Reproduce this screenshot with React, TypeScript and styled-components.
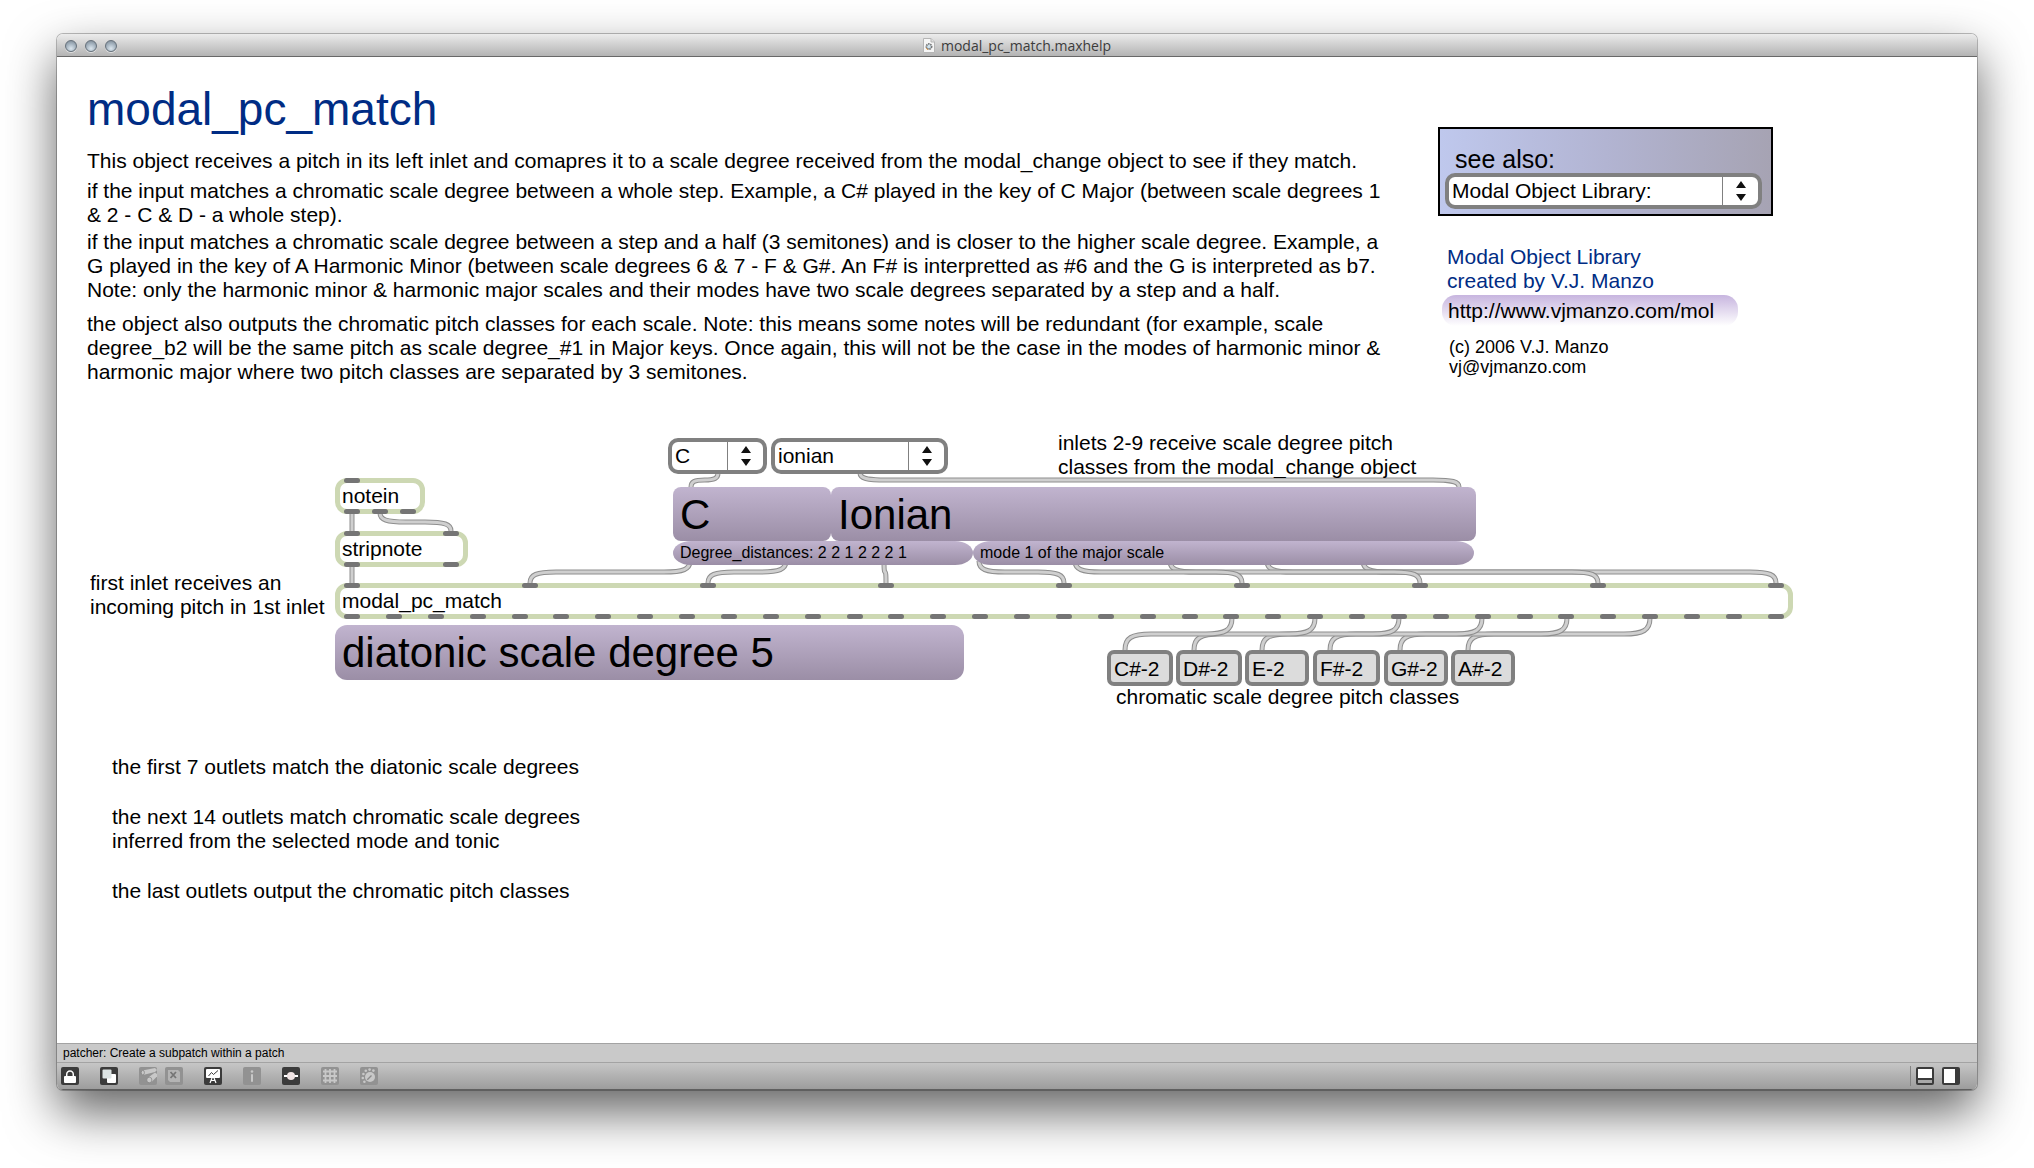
import React from "react";
import styled, { createGlobalStyle, css } from "styled-components";

const GlobalStyle = createGlobalStyle`
  *, *::before, *::after { box-sizing: border-box; }
  html, body, #root { height: 100%; }
  body {
    margin: 0;
    background: #fff;
    color: #000;
    font-family: "Liberation Sans", Arial, sans-serif;
    font-size: 21px;
    line-height: 24px;
  }
  button, input, select { font: inherit; color: inherit; }
  h1, p { margin: 0; }
`;

/* ---------- window frame ---------- */

const Desktop = styled.div`
  min-height: 100%;
  display: flex;
  padding: 34px 57px 78px;
`;

const Window = styled.main`
  flex: 1;
  min-width: 0;
  display: flex;
  flex-direction: column;
  background: #fff;
  border-radius: 6px;
  overflow: hidden;
  box-shadow: 0 0 0 1px rgba(0, 0, 0, 0.25), 0 22px 50px rgba(0, 0, 0, 0.62);
`;

const TitleBar = styled.header`
  height: 23px;
  display: grid;
  grid-template-columns: 1fr auto 1fr;
  align-items: center;
  padding: 1px 8px 0;
  background: linear-gradient(#ececec, #d2d2d2 45%, #b4b4b4);
  border-bottom: 1px solid #686868;
`;

const Lights = styled.div`
  display: flex;
  gap: 8px;
`;

const Light = styled.button`
  width: 12px;
  height: 12px;
  padding: 0;
  border: 1px solid #66717b;
  border-radius: 50%;
  background: radial-gradient(circle at 50% 75%, #dbe6ee, #a3b1bd 55%, #77848f);
  box-shadow: 0 1px 0 rgba(255, 255, 255, 0.5);
`;

const FileName = styled.div`
  display: flex;
  align-items: center;
  gap: 6px;
  color: #3c3c3c;
  font-family: "Open Sans", "Noto Sans", sans-serif;
  font-size: 14px;
  line-height: 20px;
`;

/* ---------- patch contents ---------- */

const Patch = styled.div`
  flex: 1;
`;

const Intro = styled.section`
  display: flex;
  align-items: flex-start;
  gap: 33px;
  height: 343px;
  padding: 26px 30px 0;
`;

const Description = styled.div`
  flex: 0 1 1318px;
  display: flex;
  flex-direction: column;
`;

const Title = styled.h1`
  color: #002c84;
  font-size: 46px;
  font-weight: 400;
  line-height: 52px;
`;

const Paragraph = styled.p<{ $gap: number }>`
  margin-top: ${(p) => p.$gap}px;
`;

const Aside = styled.aside`
  flex: 0 0 335px;
  display: flex;
  flex-direction: column;
  padding-top: 44px;
`;

const SeeAlso = styled.div`
  display: flex;
  flex-direction: column;
  padding: 17px 9px 5px 5px;
  border: 2px solid #000;
  background: linear-gradient(90deg, #bfc8ed, #b2b4d2 50%, #a6a3b3);
`;

const SeeAlsoLabel = styled.label`
  padding-left: 10px;
  font-size: 25px;
  line-height: 27px;
`;

const Credits = styled.div`
  display: flex;
  flex-direction: column;
  align-items: flex-start;
  margin-top: 29px;
  padding-left: 4px;
`;

const Author = styled.p`
  padding-left: 5px;
  color: #002c84;
`;

const SiteLink = styled.a`
  width: 296px;
  margin-top: 2px;
  padding: 1px 0 0 6px;
  border-radius: 14px;
  background: linear-gradient(#c7b5df, #fff);
  color: #000;
  line-height: 30px;
  text-decoration: none;
`;

const Copyright = styled.p`
  margin-top: 11px;
  padding-left: 7px;
  font-size: 18px;
  line-height: 20px;
`;

const Notes = styled.section`
  display: flex;
  flex-direction: column;
  gap: 26px;
  max-width: 560px;
  padding: 0 0 0 55px;
`;

/* ---------- menus ---------- */

const MenuFrame = styled.div`
  height: 36px;
  display: grid;
  grid-template-columns: 1fr 36px;
  border: 4px solid #808080;
  border-radius: 10px;
  background: #fff;
`;

const MenuSelect = styled.select`
  grid-area: 1 / 1 / 2 / 3;
  appearance: none;
  min-width: 0;
  padding: 0 36px 0 3px;
  border: 0;
  outline: 0;
  background: transparent;
`;

const MenuArrows = styled.span`
  grid-area: 1 / 2;
  display: grid;
  place-items: center;
  border-left: 1px solid #808080;
  pointer-events: none;
`;

interface MenuProps {
  id: string;
  value: string;
  label?: string;
}

function Menu({ id, value, label }: MenuProps) {
  return (
    <MenuFrame>
      <MenuSelect id={id} aria-label={label} defaultValue={value}>
        <option>{value}</option>
      </MenuSelect>
      <MenuArrows>
        <svg width="12" height="22" viewBox="0 0 12 22" aria-hidden="true">
          <path d="M6 1 L11 8 H1 Z M6 21 L11 14 H1 Z" fill="#111" />
        </svg>
      </MenuArrows>
    </MenuFrame>
  );
}

/* ---------- diagram ---------- */

const Canvas = styled.section`
  position: relative;
  height: 355px;
`;

const Cords = styled.svg`
  position: absolute;
  inset: 0;
  width: 100%;
  height: 100%;
`;

interface Place {
  $x: number;
  $y: number;
  $w: number;
  $h?: number;
}

const placed = css<Place>`
  position: absolute;
  left: ${(p) => p.$x}px;
  top: ${(p) => p.$y}px;
  width: ${(p) => p.$w}px;
  ${(p) => p.$h && `height: ${p.$h}px;`}
`;

const Slot = styled.div<Place>`
  ${placed}
`;

const Comment = styled.p<Place>`
  ${placed}
  overflow: hidden;
`;

const ObjectBox = styled.div<Place>`
  ${placed}
  height: 36px;
  padding: 1px 2px 0;
  border: 5px solid #cdd8b3;
  border-radius: 12px;
`;

const Ports = styled.div<{ $edge: "top" | "bottom" }>`
  position: absolute;
  left: 4px;
  right: 4px;
  ${(p) => p.$edge}: -5px;
  display: flex;
  justify-content: space-between;
`;

const Port = styled.span`
  width: 16px;
  height: 5px;
  border-radius: 3px;
  background: #757575;
`;

const Display = styled.div<Place & { $small?: boolean; $radius: string }>`
  ${placed}
  padding: 0 7px;
  border-radius: ${(p) => p.$radius};
  background: linear-gradient(#c1b4cf, #9b8ea6);
  font-size: ${(p) => (p.$small ? 16 : 42)}px;
  line-height: ${(p) => (p.$small ? 24 : 56)}px;
`;

const NumberBox = styled.input<Place>`
  ${placed}
  height: 36px;
  padding: 1px 2px 0 3px;
  border: 4px solid #808080;
  border-radius: 7px;
  outline: 0;
  background: #dcdcdc;
`;

interface PatchObjectProps {
  name: string;
  x: number;
  y: number;
  w: number;
  inlets: number;
  outlets: number;
}

function PatchObject({ name, x, y, w, inlets, outlets }: PatchObjectProps) {
  return (
    <ObjectBox $x={x} $y={y} $w={w}>
      <Ports $edge="top">
        {Array.from({ length: inlets }, (_, i) => (
          <Port key={i} />
        ))}
      </Ports>
      {name}
      <Ports $edge="bottom">
        {Array.from({ length: outlets }, (_, i) => (
          <Port key={i} />
        ))}
      </Ports>
    </ObjectBox>
  );
}

type Cord = [number, number, number, number];

const cords: Cord[] = [
  [295, 113, 295, 131],
  [323, 113, 394, 131],
  [295, 166, 295, 183],
  [661, 73, 634, 87],
  [803, 73, 1402, 87],
  [1306, 161, 1719, 183],
  [1210, 161, 1541, 183],
  [1113, 161, 1363, 183],
  [1018, 161, 1185, 183],
  [922, 161, 1007, 183],
  [827, 161, 829, 183],
  [729, 161, 651, 183],
  [633, 161, 473, 183],
  [1593, 218, 1411, 250],
  [1510, 218, 1343, 250],
  [1425, 218, 1273, 250],
  [1342, 218, 1205, 250],
  [1258, 218, 1137, 250],
  [1175, 218, 1068, 250],
];

function cordPath([x1, y1, x2, y2]: Cord) {
  const mid = (y1 + y2) / 2;
  const dip = (mid - y1) * 0.75;
  const bend = Math.min(26, Math.abs(x2 - x1) / 2) * Math.sign(x2 - x1);
  const ease = bend * 0.25;
  return (
    `M${x1} ${y1} C${x1} ${y1 + dip} ${x1 + ease} ${mid} ${x1 + bend} ${mid} ` +
    `H${x2 - bend} C${x2 - ease} ${mid} ${x2} ${y2 - dip} ${x2} ${y2}`
  );
}

const pitches = [
  { name: "C#-2", x: 1050, w: 66 },
  { name: "D#-2", x: 1119, w: 66 },
  { name: "E-2", x: 1188, w: 64 },
  { name: "F#-2", x: 1256, w: 67 },
  { name: "G#-2", x: 1327, w: 64 },
  { name: "A#-2", x: 1394, w: 64 },
];

function Diagram() {
  return (
    <Canvas>
      <Cords aria-hidden="true" fill="none">
        {cords.map((cord) => (
          <g key={cord.join()}>
            <path d={cordPath(cord)} stroke="#8e8e8e" strokeWidth="5" />
            <path d={cordPath(cord)} stroke="#cfcfcf" strokeWidth="3" />
          </g>
        ))}
      </Cords>

      <Slot $x={611} $y={38} $w={99}>
        <Menu id="tonic" label="Tonic" value="C" />
      </Slot>
      <Slot $x={714} $y={38} $w={177}>
        <Menu id="mode" label="Mode" value="ionian" />
      </Slot>
      <Comment $x={1001} $y={31} $w={400} $h={47}>
        inlets 2-9 receive scale degree pitch
        <br />
        classes from the modal_change object
      </Comment>

      <Display $x={616} $y={87} $w={158} $h={54} $radius="8px">
        C
      </Display>
      <Display $x={774} $y={87} $w={645} $h={54} $radius="8px">
        Ionian
      </Display>
      <Display $x={616} $y={141} $w={300} $h={24} $radius="18px / 12px" $small>
        Degree_distances: 2 2 1 2 2 2 1
      </Display>
      <Display $x={916} $y={141} $w={501} $h={24} $radius="18px / 12px" $small>
        mode 1 of the major scale
      </Display>

      <PatchObject name="notein" x={278} y={78} w={90} inlets={1} outlets={3} />
      <PatchObject name="stripnote" x={278} y={131} w={133} inlets={2} outlets={2} />
      <Comment $x={33} $y={171} $w={242} $h={47}>
        first inlet receives an
        <br />
        incoming pitch in 1st inlet
      </Comment>
      <PatchObject name="modal_pc_match" x={278} y={183} w={1458} inlets={9} outlets={35} />

      <Display $x={278} $y={225} $w={629} $h={55} $radius="12px">
        diatonic scale degree 5
      </Display>

      {pitches.map((pitch) => (
        <NumberBox
          key={pitch.name}
          $x={pitch.x}
          $y={250}
          $w={pitch.w}
          aria-label={`Pitch class ${pitch.name}`}
          defaultValue={pitch.name}
        />
      ))}
      <Comment $x={1059} $y={285} $w={400} $h={24}>
        chromatic scale degree pitch classes
      </Comment>
    </Canvas>
  );
}

/* ---------- status bar and toolbar ---------- */

const Status = styled.div`
  height: 19px;
  padding-left: 6px;
  border-top: 1px solid #a3a3a3;
  background: #c9c9c9;
  font-size: 12px;
  line-height: 18px;
`;

const Toolbar = styled.footer`
  height: 28px;
  display: flex;
  align-items: center;
  gap: 21px;
  padding: 0 17px 0 4px;
  border-top: 1px solid #a3a3a3;
  border-bottom: 1px solid #606060;
  background: linear-gradient(#c6c6c6, #9d9d9d);
`;

const ToolGroup = styled.div`
  display: flex;
  gap: 8px;
`;

const PanelGroup = styled(ToolGroup)`
  margin-left: auto;
  padding: 1px 0 1px 5px;
  border-left: 1px solid #848484;
`;

const Tool = styled.button<{ $off?: boolean }>`
  display: block;
  width: 18px;
  height: 18px;
  padding: 0;
  border: 0;
  border-radius: 2px;
  background: ${(p) => (p.$off ? "#929292" : "#3b3b3b")};
  color: ${(p) => (p.$off ? "#c8c8c8" : "#fff")};

  svg { display: block; }
`;

interface ToolIconProps {
  label: string;
  off?: boolean;
  children: React.ReactNode;
}

function ToolIcon({ label, off, children }: ToolIconProps) {
  return (
    <Tool type="button" aria-label={label} $off={off}>
      <svg width="18" height="18" viewBox="0 0 18 18" fill="none" stroke="none" aria-hidden="true">
        {children}
      </svg>
    </Tool>
  );
}

function PatchToolbar() {
  return (
    <Toolbar>
      <ToolIcon label="Lock">
        <rect x="3" y="9" width="12" height="7" rx="1" fill="currentColor" />
        <path d="M5.7 9.5 V7.5 a3.3 3.5 0 0 1 6.6 0 V9.5" stroke="currentColor" strokeWidth="1.5" />
      </ToolIcon>
      <ToolIcon label="New view">
        <rect x="7" y="7" width="9" height="9" rx="1" fill="currentColor" />
        <rect x="2.5" y="2.5" width="9" height="9" rx="1" fill="#dde4e4" />
      </ToolIcon>
      <ToolGroup>
        <ToolIcon label="Patch cords" off>
          <path d="M3.5 3.5 L16 1 L18 3 L16 5 L4 8 Z" fill="currentColor" />
          <path d="M8.5 11 L16 5.5 L18 7 V9.5 L12 15.5 Z" fill="currentColor" />
          <ellipse cx="3.8" cy="5.6" rx="1.6" ry="2.3" fill="#c8c8c8" stroke="#808080" strokeWidth="0.7" />
          <ellipse cx="10.3" cy="13" rx="2.6" ry="2.8" fill="#c8c8c8" stroke="#808080" strokeWidth="0.7" />
        </ToolIcon>
        <ToolIcon label="Close subpatch" off>
          <path d="M3 3 H13 L15 5 V15 H5 L3 13 Z" fill="#b4b4b4" />
          <path d="M5.5 5 L11 11 M11 5 L5.5 11" stroke="#757575" strokeWidth="1.8" />
        </ToolIcon>
      </ToolGroup>
      <ToolIcon label="Presentation">
        <rect x="2" y="2" width="14" height="9" rx="1" fill="currentColor" />
        <path d="M4.5 9 L7.5 5.5 L9.5 7.5 L14 3.5" stroke="#3b3b3b" />
        <path d="M8 11 L6 16 M10 11 L12 16 M7 13.5 H11" stroke="currentColor" strokeWidth="1.2" />
      </ToolIcon>
      <ToolIcon label="Inspector" off>
        <rect x="8" y="7" width="2" height="8" rx="1" fill="currentColor" />
        <circle cx="9" cy="4.5" r="1.3" fill="currentColor" />
      </ToolIcon>
      <ToolIcon label="Signal">
        <path d="M2 9 H16" stroke="currentColor" strokeWidth="2" />
        <circle cx="9" cy="9" r="4" fill="#f0e4e4" />
      </ToolIcon>
      <ToolIcon label="Grid" off>
        <path
          d="M4.5 2 V16 M9 2 V16 M13.5 2 V16 M2 4.5 H16 M2 9 H16 M2 13.5 H16"
          stroke="currentColor"
          strokeWidth="1.8"
        />
      </ToolIcon>
      <ToolIcon label="Controls" off>
        <circle cx="10" cy="10" r="5" fill="currentColor" />
        <path d="M7.3 12.7 L11.5 8.5" stroke="#8a8a8a" strokeWidth="1.3" />
        <g fill="currentColor">
          <circle cx="2.8" cy="11" r="1.3" />
          <circle cx="3.4" cy="7" r="1.3" />
          <circle cx="5.8" cy="3.8" r="1.3" />
          <circle cx="9.6" cy="2.6" r="1.3" />
          <circle cx="13.4" cy="3.6" r="1.3" />
          <circle cx="4.4" cy="14.8" r="1.3" />
        </g>
      </ToolIcon>
      <PanelGroup>
        <ToolIcon label="Bottom panel">
          <rect x="2" y="2" width="14" height="9" fill="currentColor" />
          <rect x="2" y="13" width="14" height="3" fill="#a8a8a8" />
        </ToolIcon>
        <ToolIcon label="Side panel">
          <rect x="2" y="2" width="11" height="14" fill="currentColor" />
        </ToolIcon>
      </PanelGroup>
    </Toolbar>
  );
}

export default function App() {
  return (
    <>
      <GlobalStyle />
      <Desktop>
        <Window>
          <TitleBar>
            <Lights>
              <Light type="button" aria-label="Close" />
              <Light type="button" aria-label="Minimize" />
              <Light type="button" aria-label="Zoom" />
            </Lights>
            <FileName>
              <svg width="12" height="15" viewBox="0 0 12 15" aria-hidden="true">
                <path d="M0.5 0.5 H8 L11.5 4 V14.5 H0.5 Z" fill="#f6f6f6" stroke="#b5b5b5" />
                <path d="M8 0.5 V4 H11.5" fill="#ddd" stroke="#b5b5b5" />
                <circle cx="6" cy="8.5" r="2.6" stroke="#777" strokeWidth="1.8" strokeDasharray="1.5 0.7" fill="#cfe3ee" />
                <path d="M3 10 L5 12" stroke="#e0a050" strokeWidth="1" />
              </svg>
              modal_pc_match.maxhelp
            </FileName>
          </TitleBar>

          <Patch>
            <Intro>
              <Description>
                <Title>modal_pc_match</Title>
                <Paragraph $gap={14}>
                  This object receives a pitch in its left inlet and comapres it to a scale degree received from the
                  modal_change object to see if they match.
                </Paragraph>
                <Paragraph $gap={6}>
                  if the input matches a chromatic scale degree between a whole step. Example, a C# played in the key of
                  C Major (between scale degrees 1<br />
                  &amp; 2 - C &amp; D - a whole step).
                </Paragraph>
                <Paragraph $gap={3}>
                  if the input matches a chromatic scale degree between a step and a half (3 semitones) and is closer to
                  the higher scale degree. Example, a<br />
                  G played in the key of A Harmonic Minor (between scale degrees 6 &amp; 7 - F &amp; G#. An F# is
                  interpretted as #6 and the G is interpreted as b7.
                  <br />
                  Note: only the harmonic minor &amp; harmonic major scales and their modes have two scale degrees
                  separated by a step and a half.
                </Paragraph>
                <Paragraph $gap={10}>
                  the object also outputs the chromatic pitch classes for each scale. Note: this means some notes will
                  be redundant (for example, scale
                  <br />
                  degree_b2 will be the same pitch as scale degree_#1 in Major keys. Once again, this will not be the
                  case in the modes of harmonic minor &amp;
                  <br />
                  harmonic major where two pitch classes are separated by 3 semitones.
                </Paragraph>
              </Description>

              <Aside>
                <SeeAlso>
                  <SeeAlsoLabel htmlFor="see-also">see also:</SeeAlsoLabel>
                  <Menu id="see-also" value="Modal Object Library:" />
                </SeeAlso>
                <Credits>
                  <Author>
                    Modal Object Library
                    <br />
                    created by V.J. Manzo
                  </Author>
                  <SiteLink href="http://www.vjmanzo.com/mol">http://www.vjmanzo.com/mol</SiteLink>
                  <Copyright>
                    (c) 2006 V.J. Manzo
                    <br />
                    vj@vjmanzo.com
                  </Copyright>
                </Credits>
              </Aside>
            </Intro>

            <Diagram />

            <Notes>
              <p>the first 7 outlets match the diatonic scale degrees</p>
              <p>
                the next 14 outlets match chromatic scale degrees
                <br />
                inferred from the selected mode and tonic
              </p>
              <p>the last outlets output the chromatic pitch classes</p>
            </Notes>
          </Patch>

          <Status>patcher: Create a subpatch within a patch</Status>
          <PatchToolbar />
        </Window>
      </Desktop>
    </>
  );
}
